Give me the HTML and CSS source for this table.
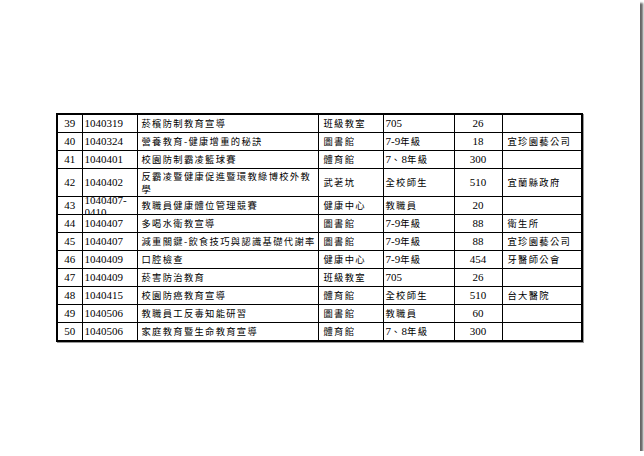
FILE: index.html
```html
<!DOCTYPE html>
<html lang="zh-Hant">
<head>
<meta charset="utf-8">
<title>健康促進活動一覽</title>
<link rel="stylesheet" href="styles.css">
</head>
<body>
<div class="page">
  <table class="plan">
    <colgroup>
      <col class="c-no"><col class="c-date"><col class="c-topic"><col class="c-place"><col class="c-target"><col class="c-count"><col class="c-partner">
    </colgroup>
    <tbody>
      <tr><td class="no">39</td><td class="date">1040319</td><td class="zh topic">菸檳防制教育宣導</td><td class="zh">班級教室</td><td class="target">705</td><td class="count">26</td><td class="zh"></td></tr>
      <tr><td class="no">40</td><td class="date">1040324</td><td class="zh topic">營養教育-健康增重的秘訣</td><td class="zh">圖書館</td><td class="target">7-9<span class="zh">年級</span></td><td class="count">18</td><td class="zh">宜珍園藝公司</td></tr>
      <tr><td class="no">41</td><td class="date">1040401</td><td class="zh topic">校園防制霸凌籃球賽</td><td class="zh">體育館</td><td class="target">7<span class="zh">、</span>8<span class="zh">年級</span></td><td class="count">300</td><td class="zh"></td></tr>
      <tr class="tall"><td class="no">42</td><td class="date">1040402</td><td class="zh topic">反霸凌暨健康促進暨環教綠博校外教<br>學</td><td class="zh">武荖坑</td><td class="zh target">全校師生</td><td class="count">510</td><td class="zh">宜蘭縣政府</td></tr>
      <tr><td class="no">43</td><td class="date"><div class="clip"><span>1040407-</span><span>0410</span></div></td><td class="zh topic">教職員健康體位管理競賽</td><td class="zh">健康中心</td><td class="zh target">教職員</td><td class="count">20</td><td class="zh"></td></tr>
      <tr><td class="no">44</td><td class="date">1040407</td><td class="zh topic">多喝水衛教宣導</td><td class="zh">圖書館</td><td class="target">7-9<span class="zh">年級</span></td><td class="count">88</td><td class="zh">衛生所</td></tr>
      <tr><td class="no">45</td><td class="date">1040407</td><td class="zh topic">減重關鍵-飲食技巧與認識基礎代謝率</td><td class="zh">圖書館</td><td class="target">7-9<span class="zh">年級</span></td><td class="count">88</td><td class="zh">宜珍園藝公司</td></tr>
      <tr><td class="no">46</td><td class="date">1040409</td><td class="zh topic">口腔檢查</td><td class="zh">健康中心</td><td class="target">7-9<span class="zh">年級</span></td><td class="count">454</td><td class="zh">牙醫師公會</td></tr>
      <tr><td class="no">47</td><td class="date">1040409</td><td class="zh topic">菸害防治教育</td><td class="zh">班級教室</td><td class="target">705</td><td class="count">26</td><td class="zh"></td></tr>
      <tr><td class="no">48</td><td class="date">1040415</td><td class="zh topic">校園防癌教育宣導</td><td class="zh">體育館</td><td class="zh target">全校師生</td><td class="count">510</td><td class="zh">台大醫院</td></tr>
      <tr><td class="no">49</td><td class="date">1040506</td><td class="zh topic">教職員工反毒知能研習</td><td class="zh">圖書館</td><td class="zh target">教職員</td><td class="count">60</td><td class="zh"></td></tr>
      <tr><td class="no">50</td><td class="date">1040506</td><td class="zh topic">家庭教育暨生命教育宣導</td><td class="zh">體育館</td><td class="target">7<span class="zh">、</span>8<span class="zh">年級</span></td><td class="count">300</td><td class="zh"></td></tr>
    </tbody>
  </table>
</div>
</body>
</html>
```
FILE: styles.css
```css
html, body {
  margin: 0;
  padding: 0;
  background: #fff;
}

.page {
  width: 640px;
  height: 451px;
  box-sizing: border-box;
  padding: 113px 0 0 56px;
  background: #fff;
  box-shadow: 3px 3px 2px #666;
}

.plan {
  border-collapse: collapse;
  table-layout: fixed;
  width: 527px;
  border: 2px solid #000;
  box-shadow: 1px 1px 0 #999;
  font-family: "Liberation Serif", "Noto Sans CJK TC", serif;
  font-size: 11px;
  color: #000;
}

.c-no { width: 25px; }
.c-date { width: 55px; }
.c-topic { width: 181px; }
.c-place { width: 65px; }
.c-target { width: 71px; }
.c-count { width: 48px; }
.c-partner { width: 80px; }

.plan td {
  border: 1px solid #000;
  height: 17px;
  padding: 0 0 0 5px;
  line-height: 13px;
  white-space: nowrap;
  overflow: hidden;
  vertical-align: middle;
}

.plan tr.tall td {
  height: 27px;
}

.plan td.no,
.plan td.count {
  text-align: center;
  padding: 0;
}

.plan td.date {
  padding-left: 2px;
}

.plan td.target {
  padding-left: 2px;
}

.zh {
  font-family: "Noto Sans CJK TC", "Liberation Serif", sans-serif;
  font-size: 9.3px;
  letter-spacing: 1.3px;
}

.plan td.topic {
  padding-left: 4px;
}

.clip {
  height: 17px;
  overflow: hidden;
  display: flex;
  flex-direction: column;
  justify-content: center;
  line-height: 12px;
}

.clip span {
  display: block;
}
```
